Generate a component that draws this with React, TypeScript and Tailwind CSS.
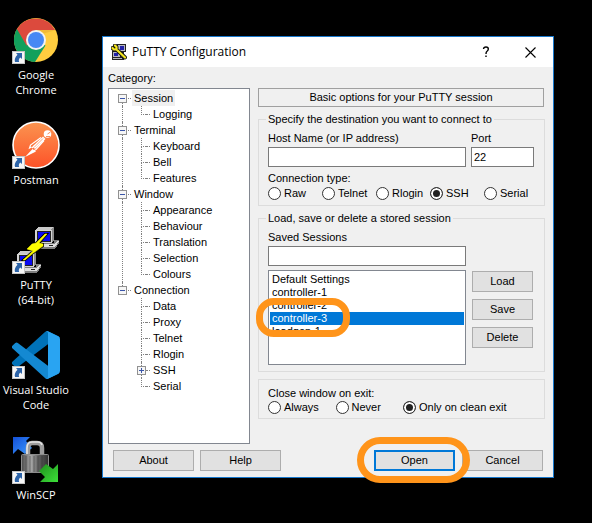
import type { ReactNode } from 'react';

const monitorScreen = '#0a0af0';

function ChromeIcon() {
  return (
    <svg viewBox="0 0 48 48" className="h-12 w-12" aria-hidden="true">
      <circle cx="24" cy="24" r="22" fill="#ffcd40" />
      <path d="M24 24 L4.9 13 A22 22 0 0 0 23 46 L33.5 29.5 Z" fill="#12a05c" />
      <path d="M24 24 L14.5 29.5 L4.9 13 A22 22 0 0 1 43.1 14 L24 14 Z" fill="#dc4a3d" />
      <path d="M24 14 L44 14 L30 18 Z" fill="#e3a92f" opacity="0.5" />
      <circle cx="24" cy="24" r="10" fill="#f2f2f2" />
      <circle cx="24" cy="24" r="8" fill="#4688f4" />
    </svg>
  );
}

function PostmanIcon() {
  return (
    <svg viewBox="0 0 48 48" className="h-12 w-12" aria-hidden="true">
      <defs>
        <linearGradient id="postman" x1="0" y1="0" x2="0" y2="1">
          <stop offset="0" stopColor="#fb9450" />
          <stop offset="1" stopColor="#fd5228" />
        </linearGradient>
      </defs>
      <circle cx="24" cy="24" r="23" fill="url(#postman)" stroke="#fff" strokeWidth="1.6" />
      <circle cx="35.5" cy="13" r="3.8" fill="#fff" />
      <path d="M35.500 13 L38.500 11 M34 15.500 L38 15.500" stroke="#fb8048" strokeWidth="0.9" />
      <path d="M31 15.500 L33.500 18 L23 28 L20.500 25.500 Z" fill="#fff" />
      <path d="M29 16.500 L18.500 24 L17.500 27 L19.500 26 M32 19.500 L24 28.500 L21.500 30 M20 27 L23.500 24" stroke="#fff" strokeWidth="1.2" fill="none" />
      <path d="M13 36 L20.500 28 L24 30.500 Z" fill="#fff" />
      <path d="M22 26.500 L31 17.500" stroke="#fb8048" strokeWidth="0.7" />
    </svg>
  );
}

function Terminal({ x, y }: { x: number; y: number }) {
  return (
    <g transform={`translate(${x} ${y})`}>
      <path d="M0 3 L3 0 H19 V13 L17 16 H0 Z" fill="#8c8c8c" />
      <path d="M3 0 H18 L16 3 H0 Z" fill="#c9c9c9" />
      <rect x="0" y="3" width="17" height="13" fill="#d4d4d4" />
      <rect x="2" y="4" width="14" height="11" fill="#222" />
      <rect x="3" y="5" width="12" height="9" fill={monitorScreen} />
      <path d="M3 19 L6 16 H19 V13 H24 V16 L20 22 H3 Z" fill="#7e7e7e" />
      <path d="M6 17 H20 L22 14 H24 L20 20 H3 Z" fill="#dedede" />
      <rect x="14" y="18" width="4" height="1" fill="#222" />
    </g>
  );
}

function PuttyIcon() {
  const bolt = 'M33 8 H35 L27 17 L31 18 V20 L20 28 L13 34 H11 L21 25 L15 23 L20 18 L24 17 Z';
  return (
    <svg viewBox="0 0 48 48" className="h-12 w-12" aria-hidden="true">
      <g shapeRendering="crispEdges">
        <Terminal x={23} y={1} />
        <Terminal x={5} y={25} />
      </g>
      <path d={bolt} fill="#000" stroke="#000" strokeWidth="2" />
      <path d={bolt} fill="#ffff00" stroke="#ffff00" strokeWidth="0.5" />
    </svg>
  );
}

function VsCodeIcon() {
  return (
    <svg viewBox="0 0 100 100" className="h-12 w-12" aria-hidden="true">
      <path
        fill="#0072b8"
        d="M96.461 10.796L75.857.876a8.230 8.230 0 0 0-7.107 1.207L1.299 63.583a4.167 4.167 0 0 0 .004 6.162l5.510 5.009a4.167 4.167 0 0 0 5.321.236L93.361 13.370C96.086 11.303 100 13.246 100 16.667v-.240a6.250 6.250 0 0 0-3.539-5.631Z"
      />
      <path
        fill="#1489d2"
        d="M96.461 89.204l-20.604 9.920a6.229 6.229 0 0 1-7.107-1.207L1.299 36.417a4.167 4.167 0 0 1 .004-6.162l5.510-5.009a4.167 4.167 0 0 1 5.321-.236l81.227 61.620C96.086 88.697 100 86.754 100 83.333v.240a6.250 6.250 0 0 1-3.539 5.631Z"
      />
      <path
        fill="#29a4f2"
        d="M75.858 99.126a6.232 6.232 0 0 1-7.108-1.209C71.056 100.223 75 98.590 75 95.328V4.672C75 1.410 71.056-.223 68.750 2.083a6.232 6.232 0 0 1 7.108-1.209l20.601 9.907A6.250 6.250 0 0 1 100 16.413v67.174a6.250 6.250 0 0 1-3.541 5.633Z"
      />
    </svg>
  );
}

function WinScpIcon() {
  return (
    <svg viewBox="0 0 48 48" className="h-12 w-12" aria-hidden="true">
      <defs>
        <linearGradient id="lock" x1="0" y1="0" x2="1" y2="0">
          <stop offset="0" stopColor="#4a4a4a" />
          <stop offset="0.35" stopColor="#a8a8a8" />
          <stop offset="0.65" stopColor="#5c5c5c" />
          <stop offset="1" stopColor="#303030" />
        </linearGradient>
        <linearGradient id="up" x1="0" y1="0" x2="1" y2="1">
          <stop offset="0" stopColor="#1450d8" />
          <stop offset="1" stopColor="#3c9bff" />
        </linearGradient>
        <linearGradient id="down" x1="0" y1="0" x2="1" y2="1">
          <stop offset="0" stopColor="#1f8f1c" />
          <stop offset="1" stopColor="#3de03a" />
        </linearGradient>
      </defs>
      <path d="M1 1 H18 L14 5 L20 12 L13 18 L6 13 L1 18 Z" fill="url(#up)" />
      <path d="M16 20 V12 Q16 7 20 7 H25 Q30 7 30 12 V20" fill="none" stroke="#9c9c9c" strokeWidth="4.500" />
      <path d="M15 19 V12 Q15 6 20 6 H26 Q29 6 30 9" fill="none" stroke="#e4e4e4" strokeWidth="1.600" />
      <rect x="9.500" y="18.500" width="27" height="18" rx="1" fill="url(#lock)" stroke="#8c8c8c" />
      <path d="M14 20 V36 M18 20 V36 M22 20 V36 M26 20 V36 M30 20 V36" stroke="#2e2e2e" strokeWidth="0.800" opacity="0.600" />
      <path d="M46 28 V46 H28 L33 41 L27 35 L34 28 L41 33 Z" fill="url(#down)" />
    </svg>
  );
}

function ShortcutArrow() {
  return (
    <svg viewBox="0 0 13 13" className="absolute bottom-0 left-0 h-[13px] w-[13px]" aria-hidden="true">
      <rect x="0.500" y="0.500" width="12" height="12" fill="#f6f6f6" stroke="#c4c4c4" />
      <path d="M4 2 H10 V8 L8.300 6.500 Q6 8.500 7.200 11 H3 Q1.800 7.500 5.500 3.800 Z" fill="#2c63a8" />
    </svg>
  );
}

function Shortcut({ icon, lines }: { icon: ReactNode; lines: string[] }) {
  return (
    <a href="#" className="flex flex-col items-center gap-[3px] text-center text-[11px] leading-[15px] text-white">
      <span className="relative block">
        {icon}
        <ShortcutArrow />
      </span>
      <span className="whitespace-nowrap">
        {lines.map((line) => (
          <span key={line} className="block">
            {line}
          </span>
        ))}
      </span>
    </a>
  );
}

type Leaf = { name: string; collapsed?: boolean };
const categories: { name: string; children: Leaf[] }[] = [
  { name: 'Session', children: [{ name: 'Logging' }] },
  { name: 'Terminal', children: [{ name: 'Keyboard' }, { name: 'Bell' }, { name: 'Features' }] },
  {
    name: 'Window',
    children: [
      { name: 'Appearance' },
      { name: 'Behaviour' },
      { name: 'Translation' },
      { name: 'Selection' },
      { name: 'Colours' },
    ],
  },
  {
    name: 'Connection',
    children: [
      { name: 'Data' },
      { name: 'Proxy' },
      { name: 'Telnet' },
      { name: 'Rlogin' },
      { name: 'SSH', collapsed: true },
      { name: 'Serial' },
    ],
  },
];

function Expander({ name, open, above, below }: { name: string; open: boolean; above: boolean; below: boolean }) {
  return (
    <span className="flex h-4 w-[9px] flex-col items-center">
      <span className={above ? 'h-1 border-l border-dotted border-[#808080]' : 'h-1'} />
      <button
        type="button"
        aria-label={open ? `Collapse ${name}` : `Expand ${name}`}
        className="flex h-[9px] w-[9px] shrink-0 items-center justify-center border border-[#919191] bg-[#f6f6f6]"
      >
        <svg viewBox="0 0 5 5" className="h-[5px] w-[5px]" shapeRendering="crispEdges" aria-hidden="true">
          <path d={open ? 'M0 2h5v1h-5z' : 'M0 2h5v1h-5z M2 0h1v5h-1z'} fill="#3a55a8" />
        </svg>
      </button>
      <span className={below ? 'h-[3px] border-l border-dotted border-[#808080]' : 'h-[3px]'} />
    </span>
  );
}

function CategoryTree() {
  return (
    <ul role="tree" aria-labelledby="category" className="flex-1 border border-[#828790] bg-white pt-px pl-[9px]">
      {categories.map((group, g) => {
        const lastGroup = g === categories.length - 1;
        return (
          <li key={group.name} role="treeitem" aria-expanded="true" aria-selected={g === 0}>
            <div className="flex h-4 items-center">
              <Expander name={group.name} open above={g > 0} below={!lastGroup} />
              <span className="mx-px w-[3px] border-t border-dotted border-[#808080]" />
              <span className={g === 0 ? 'bg-[#f0f0f0] px-[2px] leading-4' : 'px-[2px] leading-4'}>{group.name}</span>
            </div>
            <ul
              role="group"
              className={lastGroup ? 'ml-1 pl-[15px]' : 'ml-1 border-l border-dotted border-[#808080] pl-[14px]'}
            >
              {group.children.map((leaf, i) => {
                const last = i === group.children.length - 1;
                return (
                  <li key={leaf.name} role="treeitem" aria-selected="false" className="flex h-4 items-center">
                    {leaf.collapsed ? (
                      <Expander name={leaf.name} open={false} above below />
                    ) : (
                      <span className="block h-4 w-[9px] pl-1">
                        <span className="block h-[9px] border-b border-l border-dotted border-[#808080]" />
                        <span className={last ? 'block h-[7px]' : 'block h-[7px] border-l border-dotted border-[#808080]'} />
                      </span>
                    )}
                    <span className="mr-px w-[4px] border-t border-dotted border-[#808080]" />
                    <span className="px-[2px] leading-4">{leaf.name}</span>
                  </li>
                );
              })}
            </ul>
          </li>
        );
      })}
    </ul>
  );
}

function Radio({ group, label, checked }: { group: string; label: string; checked?: boolean }) {
  return (
    <label className="flex items-center gap-[3px] whitespace-nowrap">
      <input
        type="radio"
        name={group}
        defaultChecked={checked}
        className="h-[13px] w-[13px] shrink-0 appearance-none rounded-full border border-[#333333] bg-white checked:bg-[#222222] checked:shadow-[inset_0_0_0_2px_white]"
      />
      {label}
    </label>
  );
}

function PushButton({ label, wide, primary }: { label: string; wide?: boolean; primary?: boolean }) {
  return (
    <button
      type="button"
      className={`${wide ? 'w-[81px]' : 'w-[61px]'} ${
        primary ? 'border-2 border-[#0078d7]' : 'border border-[#adadad]'
      } flex h-[21px] items-center justify-center bg-[#e1e1e1]`}
    >
      {label}
    </button>
  );
}

const groupBox = 'min-w-0 border border-[#dcdcdc] px-[9px]';
const textBox = 'block h-5 w-full min-w-0 border border-[#7a7a7a] bg-white px-[2px]';
const option =
  'h-[13px] min-h-0 p-0 pl-[2px] leading-[13px] checked:bg-[linear-gradient(#0078d7,#0078d7)] checked:[-webkit-text-fill-color:white]';

export default function App() {
  return (
    <div className="flex min-h-screen items-start bg-black font-['Open_Sans','Noto_Sans',sans-serif]">
      <nav className="grid w-[72px] shrink-0 auto-rows-[82px] gap-[23px] pt-4">
        <Shortcut icon={<ChromeIcon />} lines={['Google', 'Chrome']} />
        <Shortcut icon={<PostmanIcon />} lines={['Postman']} />
        <Shortcut icon={<PuttyIcon />} lines={['PuTTY', '(64-bit)']} />
        <Shortcut icon={<VsCodeIcon />} lines={['Visual Studio', 'Code']} />
        <Shortcut icon={<WinScpIcon />} lines={['WinSCP']} />
      </nav>

      <main className="mt-9 mr-[38px] ml-[30px] min-w-0 flex-1 border border-[#1878cc] bg-[#f0f0f0] text-black">
        <header className="flex h-[30px] items-center bg-white pl-2 text-[12px]">
          <svg viewBox="0 0 16 16" className="mr-[5px] h-4 w-4" aria-hidden="true">
            <g shapeRendering="crispEdges">
              <path d="M6 0h9v8h-2v2h-8v-2h1z M1 7h9v6h3v3h-12z" fill="#222" />
              <path d="M7 1h7v6h-7z M2 8h7v5h-7z M2 14h9v1h-9z" fill="#b8b8c0" />
              <path d="M9 2h4v4h-4z M3 9h4v3h-4z" fill="#2222a8" />
            </g>
            <g fill="none" strokeLinecap="round" strokeLinejoin="round">
              <path d="M4 1.500 L5.500 3 V5.500 H3 L1.500 4 M5 5 L14 13.500" stroke="#111" strokeWidth="4" />
              <path d="M4 1.500 L5.500 3 V5.500 H3 L1.500 4 M5 5 L14 13.500" stroke="#f4e620" strokeWidth="2.200" />
            </g>
          </svg>
          <h1 className="flex-1">PuTTY Configuration</h1>
          <button type="button" aria-label="Help" className="h-[29px] w-[45px]">
            <svg viewBox="0 0 8 12" className="mx-auto h-3 w-2" fill="none" stroke="#000" strokeWidth="1.400" aria-hidden="true">
              <path d="M1.500 3 Q1.700 1 4 1 Q6.300 1 6.300 3 Q6.300 4.300 5 5.300 Q4 6 4 8" />
              <path d="M4 9.500 V11" />
            </svg>
          </button>
          <button type="button" aria-label="Close" className="h-[29px] w-[45px]">
            <svg viewBox="0 0 11 11" className="mx-auto h-[11px] w-[11px]" stroke="#000" strokeWidth="1.100" aria-hidden="true">
              <path d="M0.500 0.500 L10.500 10.500 M10.500 0.500 L0.500 10.500" />
            </svg>
          </button>
        </header>

        <form
          onSubmit={(e) => e.preventDefault()}
          className="px-[5px] pt-[5px] pb-[6px] font-['Liberation_Sans',Arial,sans-serif] text-[11px] leading-[13px]"
        >
          <div id="category" className="mb-[3px]">
            Category:
          </div>
          <div className="flex gap-2 pr-[3px]">
            <section className="flex w-[142px] shrink-0 flex-col">
              <CategoryTree />
            </section>

            <section className="min-w-0 flex-1 pb-[25px]">
              <h2 className="mr-px h-[19px] border border-[#a0a0a0] text-center leading-[17px]">
                Basic options for your PuTTY session
              </h2>

              <fieldset className={`${groupBox} mt-[6px] h-[93px]`}>
                <legend className="-ml-[2px] px-[2px]">Specify the destination you want to connect to</legend>
                <div className="mt-[6px] flex gap-[5px] pr-px">
                  <label className="min-w-0 flex-1">
                    <span className="mb-[2px] block">Host Name (or IP address)</span>
                    <input type="text" className={textBox} />
                  </label>
                  <label className="w-[63px]">
                    <span className="mb-[2px] block">Port</span>
                    <input type="text" defaultValue="22" className={textBox} />
                  </label>
                </div>
                <div className="mt-[5px]">Connection type:</div>
                <div role="radiogroup" aria-label="Connection type" className="-mr-[3px] mt-[2px] grid grid-cols-5">
                  <Radio group="protocol" label="Raw" />
                  <Radio group="protocol" label="Telnet" />
                  <Radio group="protocol" label="Rlogin" />
                  <Radio group="protocol" label="SSH" checked />
                  <Radio group="protocol" label="Serial" />
                </div>
              </fieldset>

              <fieldset className={`${groupBox} mt-[6px] pb-[6px]`}>
                <legend className="-ml-[2px] px-[2px]">Load, save or delete a stored session</legend>
                <div className="mt-[6px] flex gap-[6px]">
                  <div className="relative min-w-0 flex-1">
                    <label>
                      <span className="mb-[2px] block">Saved Sessions</span>
                      <input type="text" className={textBox} />
                    </label>
                    <select
                      size={7}
                      aria-label="Stored sessions"
                      defaultValue="controller-3"
                      className="mt-1 block h-[95px] w-full appearance-none overflow-hidden border border-[#828790] bg-white px-px pt-[2px] text-[11px] leading-[13px]"
                    >
                      <option className={option}>Default Settings</option>
                      <option className={option}>controller-1</option>
                      <option className={option}>controller-2</option>
                      <option className={option}>controller-3</option>
                      <option className={option}>loadgen-1</option>
                    </select>
                    <span className="pointer-events-none absolute top-[67px] -left-3 h-[39px] w-[94px] rounded-[18px] border-[7px] border-[#ff941a]" />
                  </div>
                  <div className="mr-[2px] flex flex-col gap-[7px] pt-10">
                    <PushButton label="Load" />
                    <PushButton label="Save" />
                    <PushButton label="Delete" />
                  </div>
                </div>
              </fieldset>

              <div className={`${groupBox} mt-[7px] h-[40px] pt-[7px]`}>
                <div id="exit">Close window on exit:</div>
                <div role="radiogroup" aria-labelledby="exit" className="-mr-[3px] mt-px grid grid-cols-4">
                  <Radio group="close" label="Always" />
                  <Radio group="close" label="Never" />
                  <Radio group="close" label="Only on clean exit" checked />
                </div>
              </div>
            </section>
          </div>

          <footer className="mt-[6px] flex gap-[6px] px-[5px]">
            <PushButton label="About" wide />
            <PushButton label="Help" wide />
            <span className="relative mr-px ml-auto">
              <PushButton label="Open" wide primary />
              <span className="pointer-events-none absolute -top-[13px] -left-[17px] z-10 h-[46px] w-[113px] rounded-[23px] border-[7px] border-[#ff941a]" />
            </span>
            <PushButton label="Cancel" wide />
          </footer>
        </form>
      </main>
    </div>
  );
}
